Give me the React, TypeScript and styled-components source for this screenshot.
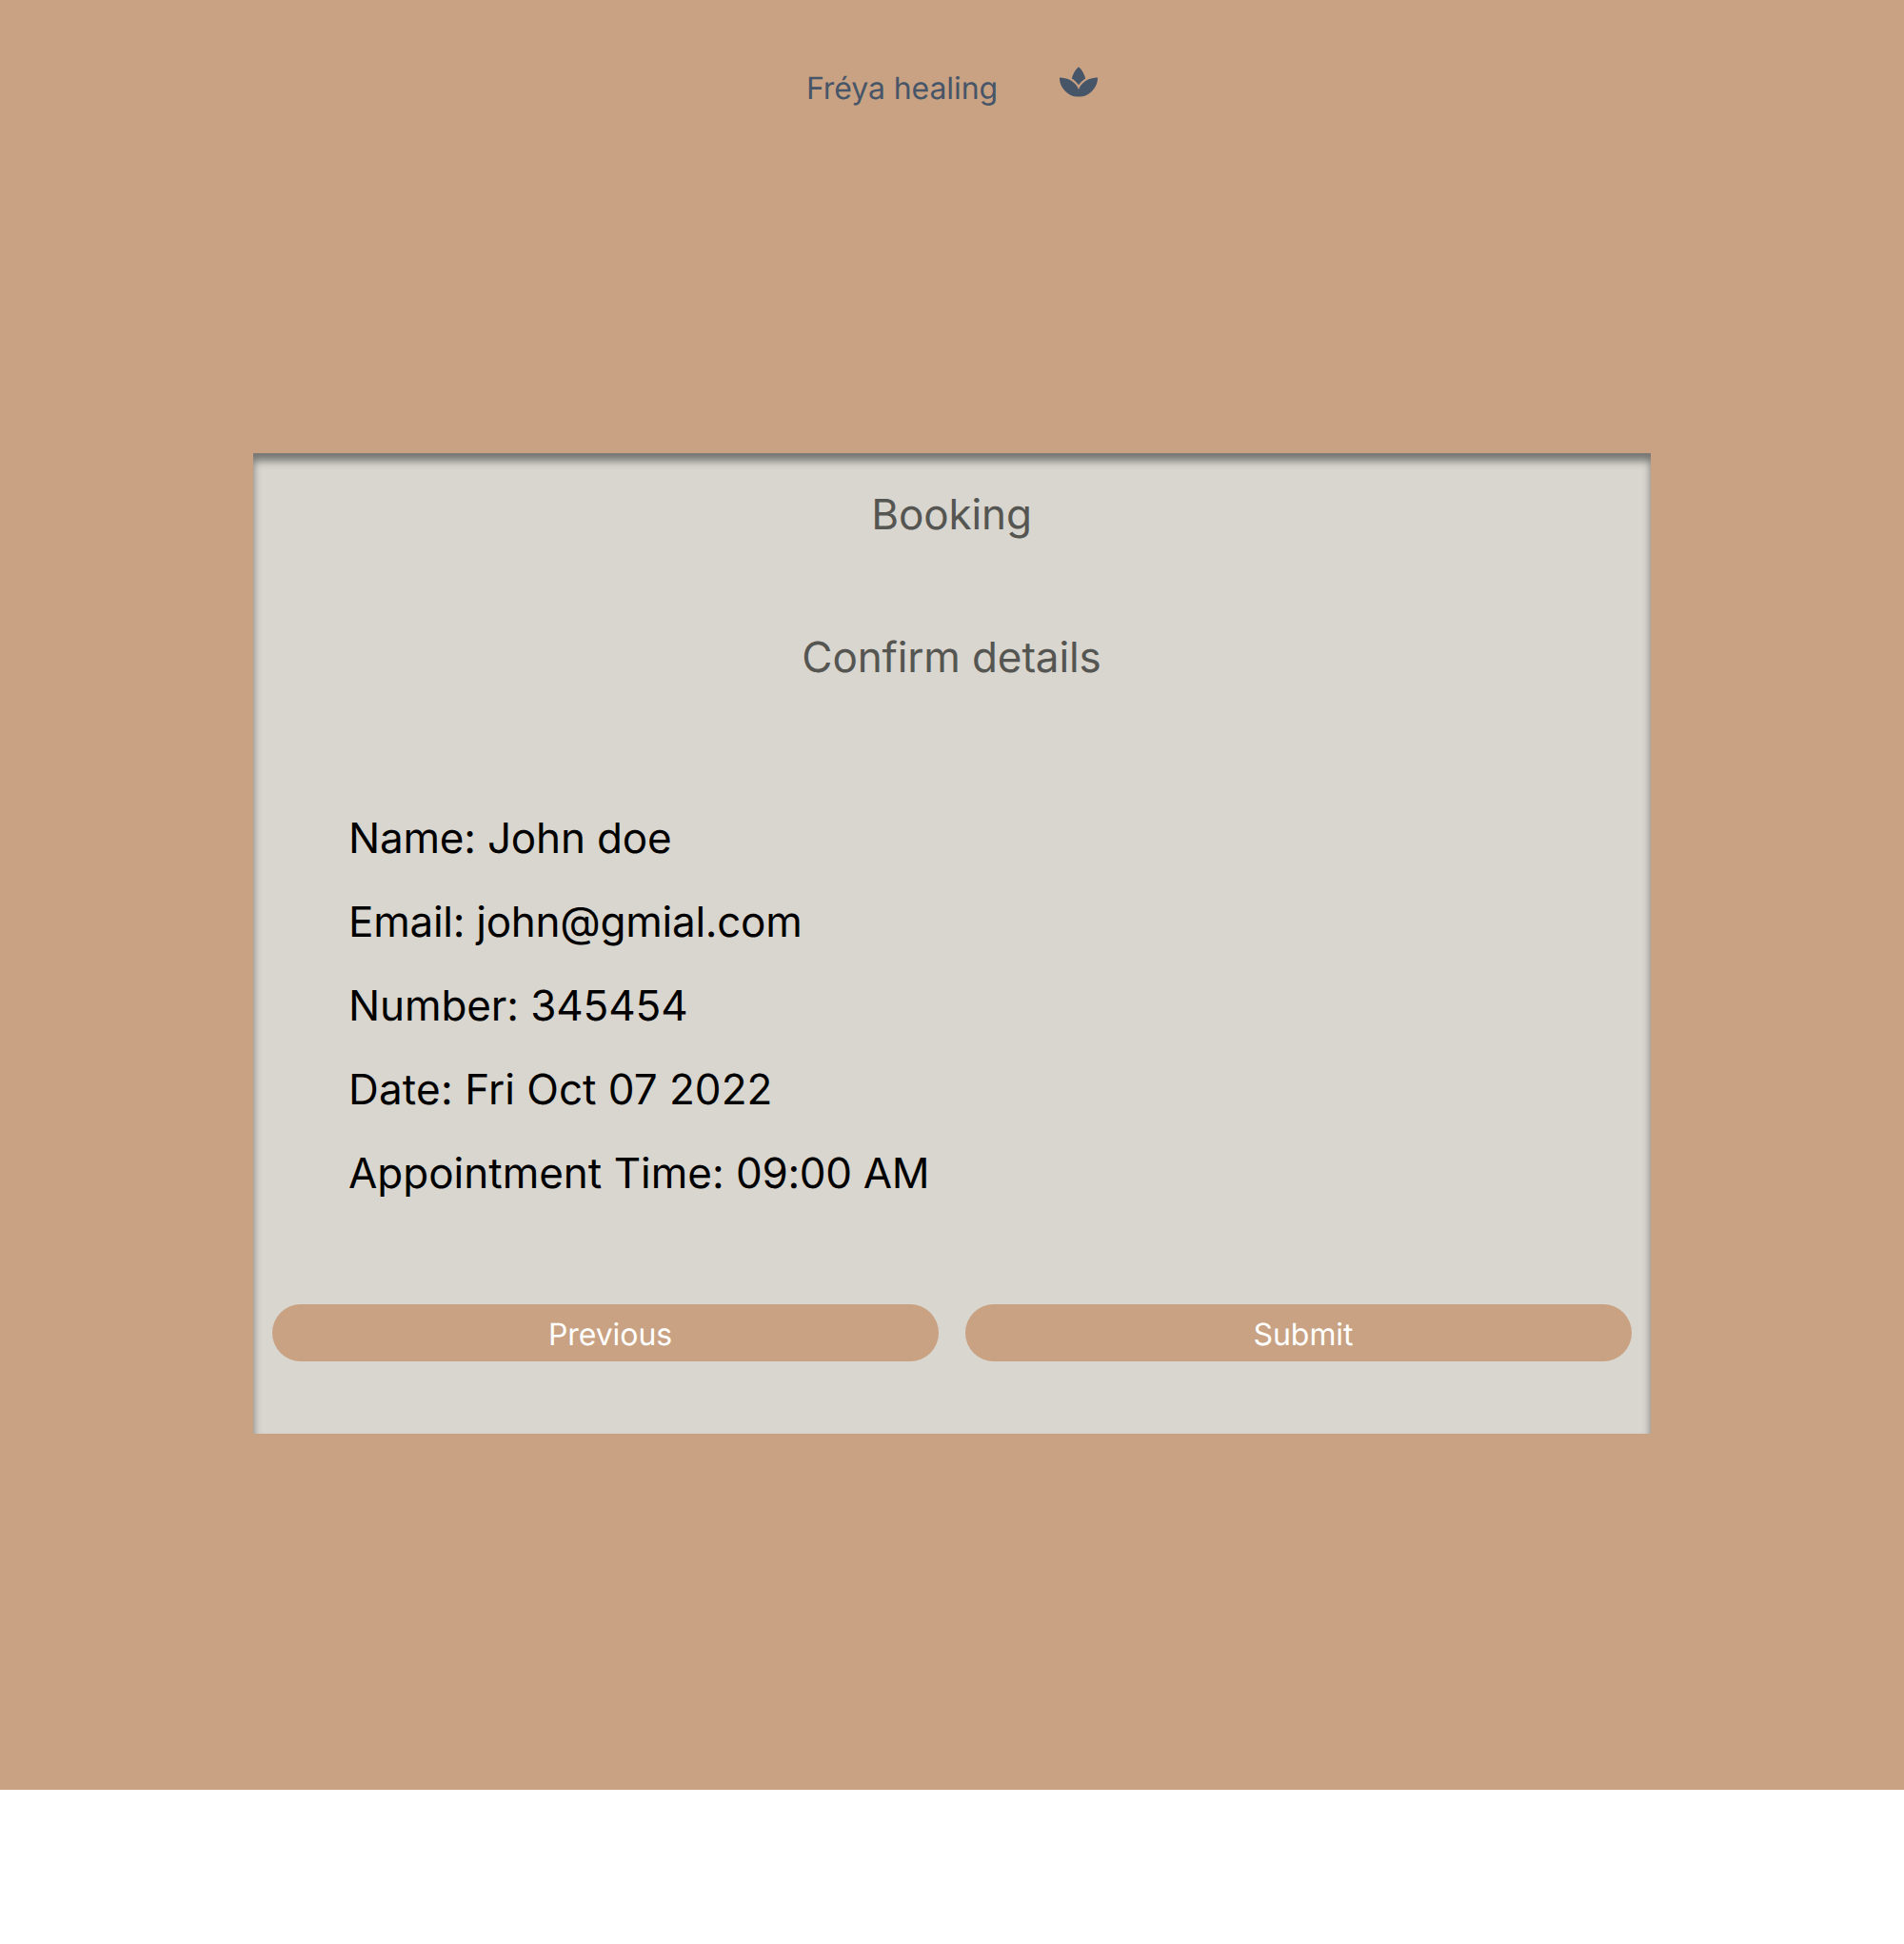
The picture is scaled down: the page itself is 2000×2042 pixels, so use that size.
import React from 'react';
import styled, { createGlobalStyle } from 'styled-components';
import { FaSpa } from 'react-icons/fa';

const GlobalStyle = createGlobalStyle`
  *, *::before, *::after { box-sizing: border-box; }
  body {
    margin: 0;
    background: #ffffff;
    font-family: Inter, "Liberation Sans", sans-serif;
    text-rendering: geometricPrecision;
  }
`;

const Page = styled.div`
  display: flex;
  flex-direction: column;
  align-items: center;
  height: 1880px;
  background: #c8a282;
`;

const Header = styled.header`
  display: flex;
  align-items: flex-start;
  justify-content: center;
  gap: 65px;
  height: 476px;
  padding-top: 68px;
  color: #475569;
`;

const Brand = styled.span`
  font-size: 32px;
  line-height: 50px;
  letter-spacing: -0.08px;
`;

const Logo = styled(FaSpa)`
  width: 40px;
  height: 36px;
`;

const Card = styled.main`
  display: flex;
  flex-direction: column;
  width: 1468px;
  height: 1030px;
  padding: 32px 20px 0;
  background: #d9d6cf;
  box-shadow: inset 0 8px 8px #747471;
`;

const Heading = styled.h1<{ $gap: number }>`
  margin: 0 0 ${(p) => p.$gap}px;
  padding-right: 1px;
  font-size: 44px;
  font-weight: 400;
  line-height: 64px;
  letter-spacing: -0.12px;
  text-align: center;
  color: #555552;
`;

const Details = styled.ul`
  list-style: none;
  margin: 0 0 94px;
  padding: 0 80px;
`;

const Detail = styled.li`
  font-size: 44px;
  line-height: 88px;
  color: #000000;
`;

const Tracked = styled.span<{ $spacing: number }>`
  letter-spacing: ${(p) => p.$spacing}px;
`;

const Actions = styled.div`
  display: grid;
  grid-template-columns: 1fr 1fr;
  gap: 28px;
`;

const Button = styled.button`
  height: 60px;
  padding: 4px 0 0 10px;
  border: 0;
  border-radius: 30px;
  background: #c8a282;
  color: #ffffff;
  font: 400 32px/48px Inter, "Liberation Sans", sans-serif;
  letter-spacing: -0.08px;
  text-rendering: inherit;
`;

const details = [
  { label: 'Name', value: 'John doe', labelSpacing: -0.2, valueSpacing: -0.15 },
  { label: 'Email', value: 'john@gmial.com', labelSpacing: -0.25, valueSpacing: -0.26 },
  { label: 'Number', value: '345454', labelSpacing: -0.1, valueSpacing: -0.1 },
  { label: 'Date', value: 'Fri Oct 07 2022', labelSpacing: 0.2, valueSpacing: 0 },
  { label: 'Appointment Time', value: '09:00 AM', labelSpacing: 0, valueSpacing: -0.3 },
];

export default function App() {
  return (
    <>
      <GlobalStyle />
      <Page>
        <Header>
          <Brand>Fréya healing</Brand>
          <Logo />
        </Header>
        <Card>
          <Heading $gap={86}>Booking</Heading>
          <Heading as="h2" $gap={114}>Confirm details</Heading>
          <Details>
            {details.map((d) => (
              <Detail key={d.label}>
                <Tracked $spacing={d.labelSpacing}>{`${d.label}: `}</Tracked>
                <Tracked $spacing={d.valueSpacing}>{d.value}</Tracked>
              </Detail>
            ))}
          </Details>
          <Actions>
            <Button type="button">Previous</Button>
            <Button type="submit">Submit</Button>
          </Actions>
        </Card>
      </Page>
    </>
  );
}
